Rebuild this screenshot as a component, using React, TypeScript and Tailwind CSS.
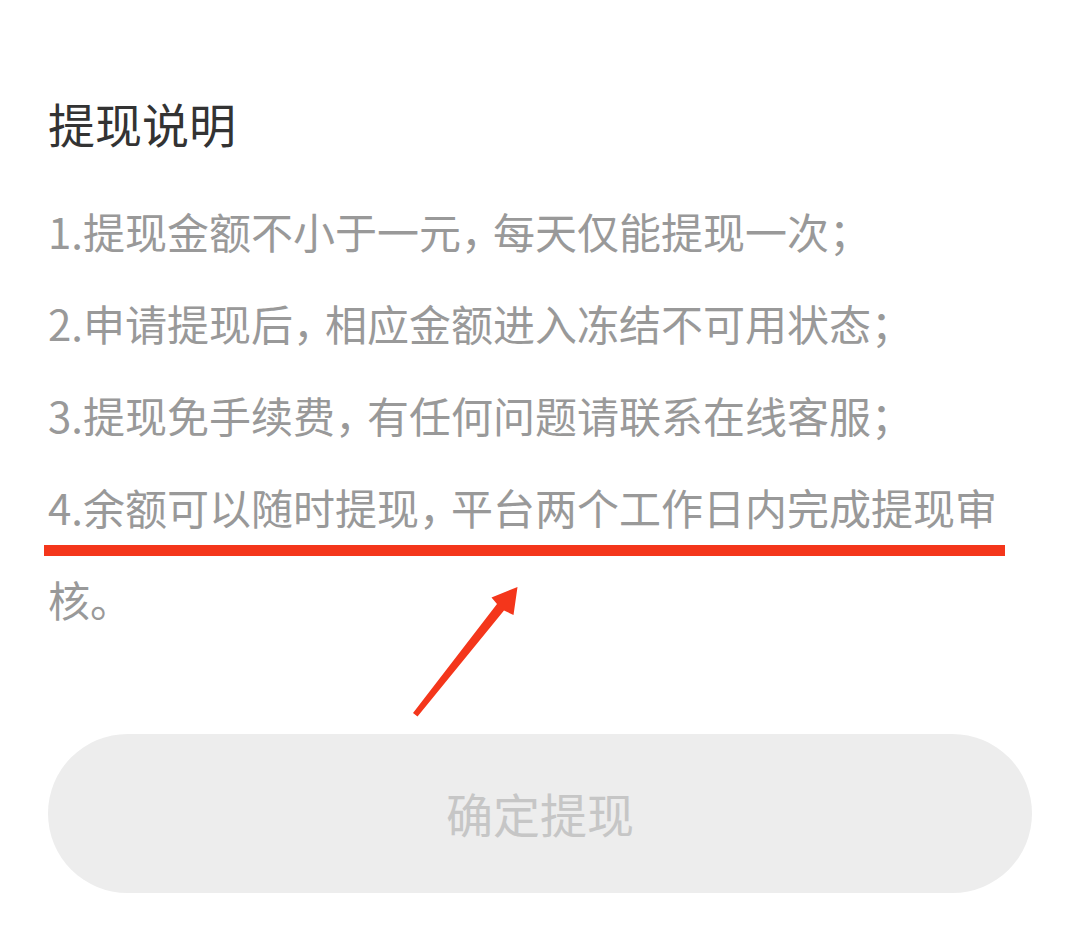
import type { ReactNode } from "react";

const font = { fontFamily: '"Noto Sans CJK SC", "Noto Sans", sans-serif' };

function Comma() {
  // the screenshot's comma is narrower than a full em: half-width glyph plus a gap
  return <span className="mr-[11px] [font-feature-settings:'halt']">，</span>;
}

function Rule({ children }: { children: ReactNode }) {
  return <p className="text-[42px] leading-[92px] text-[#999999]">{children}</p>;
}

export default function App() {
  return (
    <div className="relative min-h-[931px] w-[1080px] bg-white" style={font}>
      <div className="flex flex-col px-[48px] pt-[93px]">
        <h1 className="text-[47px] leading-[60px] font-normal text-[#333333]">提现说明</h1>

        <div className="mt-[32px] flex flex-col">
          <Rule>
            1.提现金额不小于一元<Comma />每天仅能提现一次；
          </Rule>
          <Rule>
            2.申请提现后<Comma />相应金额进入冻结不可用状态；
          </Rule>
          <Rule>
            3.提现免手续费<Comma />有任何问题请联系在线客服；
          </Rule>
          <Rule>
            4.余额可以随时提现<Comma />平台两个工作日内完成提现审核。
          </Rule>
        </div>

        <button className="mt-[89px] flex h-[159px] w-full items-center justify-center rounded-full bg-[#ededed] text-[47px] text-[#c6c6c6]">
          确定提现
        </button>
      </div>

      {/* annotation: red underline + arrow */}
      <div className="absolute left-[44px] top-[545px] h-[11px] w-[961px] bg-[#f4361b]" />
      <svg className="absolute left-0 top-0" width="1080" height="931" viewBox="0 0 1080 931">
        <polygon
          points="413,713 497,604 491.5,597.5 517.5,587 513.5,615 504,610.5 417.5,716.5"
          fill="#f4361b"
        />
      </svg>
    </div>
  );
}
